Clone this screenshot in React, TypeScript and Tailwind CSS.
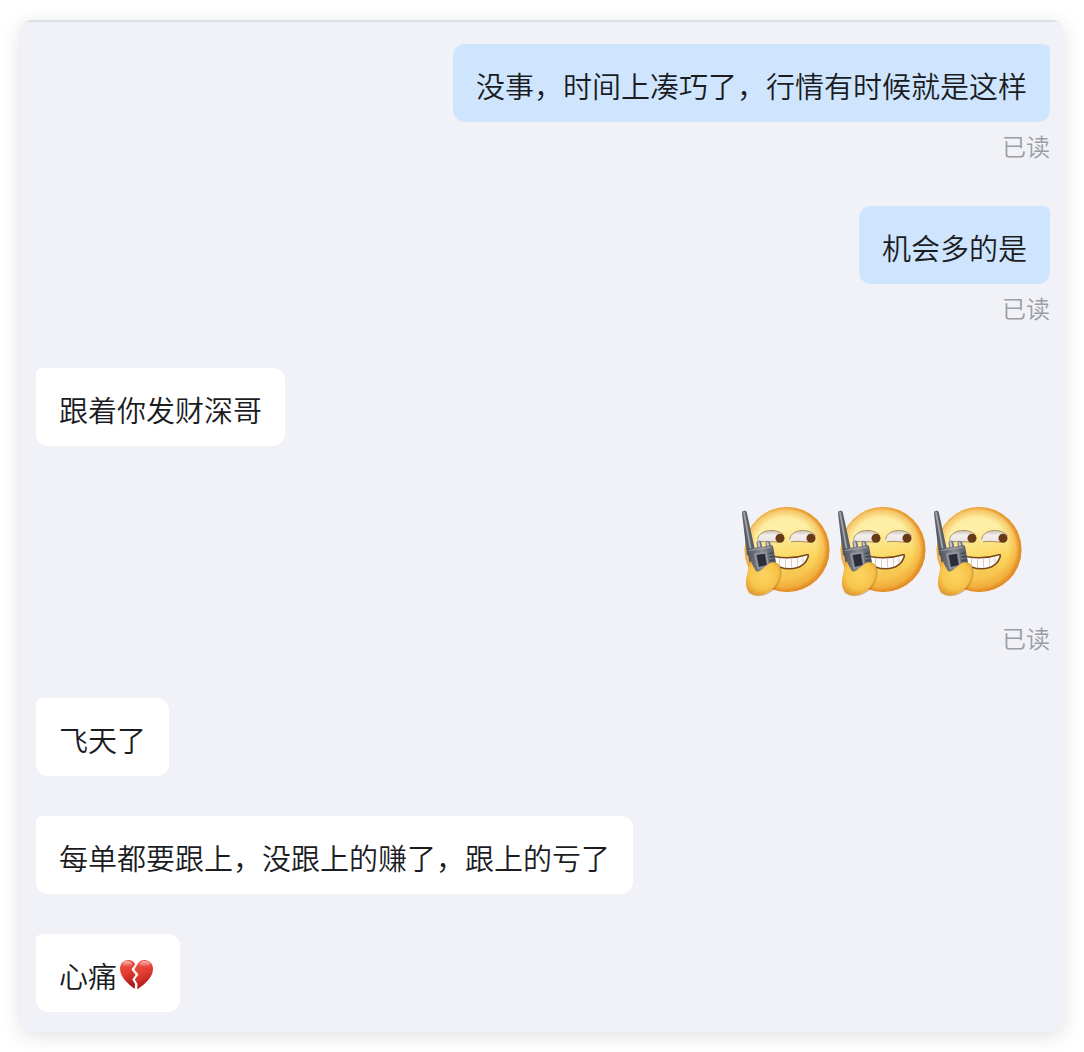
import { useId } from "react";
import type { ReactNode } from "react";

interface Message {
  id: number;
  from: "me" | "them";
  text?: string;
  heart?: boolean;
  stickers?: number;
}

const messages: Message[] = [
  { id: 1, from: "me", text: "没事，时间上凑巧了，行情有时候就是这样" },
  { id: 2, from: "me", text: "机会多的是" },
  { id: 3, from: "them", text: "跟着你发财深哥" },
  { id: 4, from: "me", stickers: 3 },
  { id: 5, from: "them", text: "飞天了" },
  { id: 6, from: "them", text: "每单都要跟上，没跟上的赚了，跟上的亏了" },
  { id: 7, from: "them", text: "心痛", heart: true },
];

function WalkieFace() {
  const id = useId();
  const face = `${id}-face`;
  const rim = `${id}-rim`;
  const hand = `${id}-hand`;
  const metal = `${id}-metal`;
  const eye = `${id}-eye`;

  return (
    <svg
      viewBox="0 0 96 96"
      className="size-24 shrink-0"
      role="img"
      aria-label="呼叫"
    >
      <defs>
        <linearGradient id={face} x1="0.4" y1="0" x2="0.6" y2="1">
          <stop offset="0" stopColor="#fdeb9a" />
          <stop offset="0.25" stopColor="#fdf0a8" />
          <stop offset="0.6" stopColor="#fbd965" />
          <stop offset="1" stopColor="#f3b23c" />
        </linearGradient>
        <radialGradient id={rim} cx="0.48" cy="0.49" r="0.52">
          <stop offset="0.7" stopColor="#f0a030" stopOpacity="0" />
          <stop offset="0.87" stopColor="#efa234" stopOpacity="0.5" />
          <stop offset="0.93" stopColor="#e8942a" stopOpacity="0.9" />
          <stop offset="1" stopColor="#de8526" />
        </radialGradient>
        <radialGradient id={hand} cx="0.5" cy="0.4" r="0.62">
          <stop offset="0" stopColor="#fcd562" />
          <stop offset="0.65" stopColor="#f8c54a" />
          <stop offset="1" stopColor="#e39a34" />
        </radialGradient>
        <linearGradient id={metal} x1="0" y1="0" x2="1" y2="0">
          <stop offset="0" stopColor="#4f515a" />
          <stop offset="0.5" stopColor="#8b8d95" />
          <stop offset="1" stopColor="#50525b" />
        </linearGradient>
        <linearGradient id={eye} x1="0" y1="0" x2="0" y2="1">
          <stop offset="0" stopColor="#c9c1b8" />
          <stop offset="0.4" stopColor="#f2eeec" />
          <stop offset="1" stopColor="#e9e4e2" />
        </linearGradient>
      </defs>

      {/* head */}
      <circle cx="49" cy="47.5" r="42.5" fill={`url(#${face})`} />
      <circle cx="49" cy="47.5" r="42.5" fill={`url(#${rim})`} />

      {/* eyes */}
      <path
        d="M19.5 37C20.5 32 26 28.5 33 28.5C39 28.5 44 30.5 46 34L43 40.5C36 39.5 28 38.8 22 39.8C20.200 40 19.200 38.800 19.500 37Z"
        fill={`url(#${eye})`}
      />
      <path
        d="M19.500 37.500C20.500 32 26 28.500 33 28.500C39 28.500 44 30.500 46 34M21 39.800C28 39 35 39.600 40 40.300"
        fill="none"
        stroke="#b3905a"
        strokeWidth="1"
      />
      <circle cx="42" cy="36.200" r="4.500" fill="#673916" />
      <path
        d="M51.500 37C52.500 32 57.500 28.500 64.500 28.500C70.500 28.500 75.500 30.500 77.500 34L74 40.500C67 39.500 59.500 38.800 54 39.800C52.200 40 51.200 38.800 51.500 37Z"
        fill={`url(#${eye})`}
      />
      <path
        d="M51.500 37.500C52.500 32 57.500 28.500 64.500 28.500C70.500 28.500 75.500 30.500 77.500 34M53 39.800C60 39 66 39.600 71 40.300"
        fill="none"
        stroke="#b3905a"
        strokeWidth="1"
      />
      <circle cx="73" cy="36.300" r="4.500" fill="#673916" />

      {/* grin */}
      <path
        d="M36 54.500C47 56.500 59 56 69 52.800C70 52.500 70.600 53 70.300 54C68.500 61.500 62 66.800 52 66.800C45 66.800 39 65 36 61Z"
        fill="#fdfcfb"
        stroke="#7a4a1c"
        strokeWidth="1.600"
        strokeLinejoin="round"
      />
      <path
        d="M41.500 56V65.500M47.500 56.500V66M53.500 56.500V66M59.500 56V65M65 54.800V61.500"
        stroke="#cfc8c6"
        strokeWidth="0.900"
      />

      {/* radio */}
      <path
        d="M4 11C3.800 8.600 8.200 8 8.800 10.400L17 48L9 54Z"
        fill="#5b5d66"
      />
      <path
        d="M6 10.500L12.500 46"
        stroke="#a1a3aa"
        strokeWidth="1.800"
        strokeLinecap="round"
      />
      <path
        d="M21 41L22.200 47M30 41.500L31 47"
        stroke="#74767f"
        strokeWidth="5"
        strokeLinecap="round"
      />
      <path
        d="M20.500 40.300L21.200 44.500M29.500 41L30.200 44.500"
        stroke="#c3c5ca"
        strokeWidth="2"
        strokeLinecap="round"
      />
      <path
        d="M9.500 49C9.400 47.600 10 46.800 11.200 46.600L33 43.400C34.200 43.200 34.900 43.800 35.100 44.800L38.500 63L18.500 73L11.500 62Z"
        fill={`url(#${metal})`}
      />
      <path d="M11 48.500L33.500 45.300" stroke="#a4a6ac" strokeWidth="1" />
      <path d="M16 51.500L28.500 49.600L31 64L19.500 67Z" fill="#9294a0" />
      <path d="M18.500 53L27 51.700L28.800 63L21 65Z" fill="#2b2d38" />
      <path
        d="M30.500 51.500L35 50.800M31 55L35.800 54.300M31.500 58.500L36.500 57.800"
        stroke="#3b3d46"
        strokeWidth="1"
      />

      {/* hand */}
      <path
        d="M38 60.5C42.800 62.500 44.300 67 43.300 73.500C42 83 35.500 89.500 28.500 92.600C22 95.300 13.500 94.800 10 89.800L13 60L18 70L32 63Z"
        fill="#a86a20"
        opacity="0.4"
      />
      <path
        d="M37.500 60.500C41.500 61.500 43 66.500 42 73C40.500 82 34.500 88.500 27.500 91.800C21 94.700 13 94 9.800 88.500C7 83.500 7.800 77 9.300 71.500C10.800 66.500 9.700 62 12 59.500C14.500 60.500 15.500 66.500 18.500 69.500C21 70.500 25.500 66 28.700 63.300C31.500 61 34.500 59.800 37.500 60.500Z"
        fill={`url(#${hand})`}
      />
    </svg>
  );
}

function BrokenHeart() {
  const id = useId();
  const red = `${id}-red`;
  const shine = `${id}-shine`;

  return (
    <svg
      viewBox="0 0 40 32"
      className="h-8 w-10 shrink-0"
      role="img"
      aria-label="心碎"
    >
      <defs>
        <linearGradient id={red} x1="0" y1="0" x2="0.3" y2="1">
          <stop offset="0" stopColor="#ee5a4c" />
          <stop offset="0.55" stopColor="#e33c30" />
          <stop offset="1" stopColor="#a91a1c" />
        </linearGradient>
        <linearGradient id={shine} x1="0" y1="0" x2="0" y2="1">
          <stop offset="0" stopColor="#ffffff" stopOpacity="0.6" />
          <stop offset="1" stopColor="#ffffff" stopOpacity="0" />
        </linearGradient>
      </defs>
      <path
        d="M18.200 5C16.500 2.300 14.500 1 11.500 1C6.500 1 3 4.800 3 10C3 18.500 12 25.500 17.800 30L18 25L15.300 20.500L18.600 15.800L14.500 10.500Z"
        fill={`url(#${red})`}
      />
      <path
        d="M20.300 5.500C22 2.300 24.500 1 27.500 1C32.500 1 36 4.800 36 10C36 18.500 27 25.800 20.300 30.500L20.400 24.800L17.800 20.600L21.400 15.600L17.300 10.600Z"
        fill={`url(#${red})`}
      />
      <ellipse cx="10.500" cy="5" rx="5" ry="3" fill={`url(#${shine})`} />
      <ellipse cx="28" cy="5" rx="5.500" ry="3" fill={`url(#${shine})`} />
    </svg>
  );
}

function Bubble({ mine, children }: { mine: boolean; children: ReactNode }) {
  return (
    <div
      className={`flex items-end rounded-xl px-[23px] pt-5 pb-4 text-[29px] leading-[42px] font-[350] text-[#1a1c1f] ${
        mine ? "rounded-tr-md bg-[#cfe5fe]" : "rounded-tl-md bg-white"
      }`}
    >
      {children}
    </div>
  );
}

export default function App() {
  return (
    <main className="bg-white p-5 font-['Noto_Sans_CJK_SC',sans-serif]">
      <section className="overflow-hidden rounded-xl bg-[#f0f2f8] shadow-[0_4px_20px_rgba(0,0,0,0.12)]">
        <div className="h-0.5 bg-[#dbdfe9]" />
        <ul className="flex flex-col gap-10 pt-[22px] pr-3.5 pb-5 pl-4">
          {messages.map((m) => {
            const mine = m.from === "me";
            return (
              <li
                key={m.id}
                className={`flex flex-col ${mine ? "items-end" : "items-start"}`}
              >
                {m.stickers ? (
                  <div className="flex px-6 py-4">
                    {Array.from({ length: m.stickers }, (_, i) => (
                      <WalkieFace key={i} />
                    ))}
                  </div>
                ) : (
                  <Bubble mine={mine}>
                    <p>{m.text}</p>
                    {m.heart && (
                      <span className="flex h-[42px] items-center">
                        <BrokenHeart />
                      </span>
                    )}
                  </Bubble>
                )}
                {mine && (
                  <span className="pt-1.5 pb-0.5 text-2xl leading-9 font-[350] text-[#9b9da3]">
                    已读
                  </span>
                )}
              </li>
            );
          })}
        </ul>
      </section>
    </main>
  );
}
